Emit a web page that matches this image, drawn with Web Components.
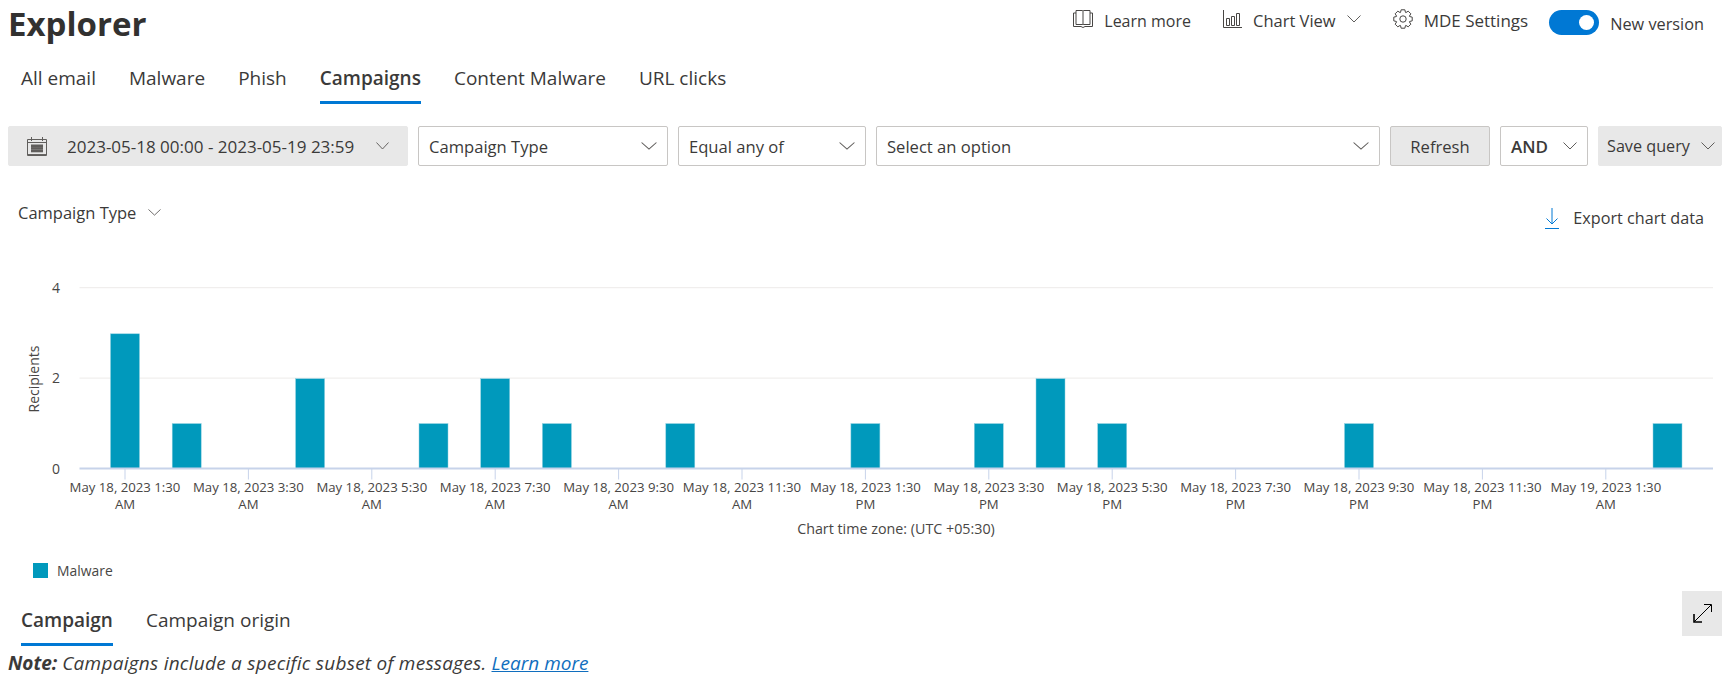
<!DOCTYPE html>
<html lang="en">
<head>
<meta charset="utf-8">
<title>Explorer</title>
<style>
  html, body { margin: 0; height: 682px; overflow: hidden; background: #fff; }
  body { font-family: "Open Sans", "Noto Sans", sans-serif; color: #3b3a39; }
</style>
</head>
<body>
<explorer-page></explorer-page>

<script>
const chevron = (w = 14, h = 8) => `<svg width="${w}" height="${h}" viewBox="0 0 14 8" preserveAspectRatio="none" fill="none" stroke="#605e5c" stroke-width="1"><path d="M.5 .5 7 7 13.5 .5"/></svg>`;

// 8 rounded teeth, same outline as the settings gear
const gearPath = () => {
    let d = '';
    for (let i = 0; i < 8; i++) {
        const a = i * Math.PI / 4;
        [[7, -.36], [9.4, -.2], [9.4, .2], [7, .36]].forEach(([r, o]) => {
            const x = (10 + r * Math.sin(a + o)).toFixed(2);
            const y = (10 - r * Math.cos(a + o)).toFixed(2);
            d += (d ? 'L' : 'M') + x + ' ' + y;
        });
    }
    return d + 'Z';
};

const calendarDots = () => {
    let s = '';
    for (let r = 0; r < 3; r++) {
        for (let c = 0; c < 4; c++) {
            s += `<rect x="${4.5 + c * 3}" y="${8 + r * 2.6}" width="2" height="1.6" fill="#a19f9d"/>`;
        }
    }
    return s;
};

const ICONS = {
    book: `<svg width="20" height="18" viewBox="0 0 20 18" fill="none" stroke="#484644"><path d="M3 .5H9.5L10 1.2 10.5 .5H17V14.5H10.5L10 15 9.5 14.5H3ZM10 1.2V15M3 3H.5V16.5H8L10 17.5 12 16.5H19.5V3H17"/></svg>`,
    chart: `<svg width="19" height="18" viewBox="0 0 19 18" fill="none" stroke="#484644"><path d="M.5 0V17.5H19M3.5 8.5H6.5V15.5H3.5ZM8.5 6.5H11.5V15.5H8.5ZM13.5 3.5H16.5V15.5H13.5Z"/></svg>`,
    gear: `<svg width="20" height="20" viewBox="0 0 20 20" fill="none" stroke="#484644" stroke-linejoin="round"><circle cx="10" cy="10" r="3.2"/><path d="${gearPath()}"/></svg>`,
    calendar: `<svg width="20" height="19" viewBox="0 0 20 19" fill="none" stroke="#605e5c"><path d="M.5 2.5H19.5V18.5H.5ZM4.5 0V4M15.5 0V4M1 5.5H19"/><path stroke-width="1.5" d="M1 17.8H19"/>${calendarDots()}</svg>`,
    download: `<svg width="14" height="21" viewBox="0 0 14 21" fill="none" stroke="#0078d4"><path d="M7 0V16M1.5 10.5 7 16 12.5 10.5M0 20.5H14"/></svg>`,
    expand: `<svg width="21" height="21" viewBox="0 0 21 21" fill="none" stroke="#000"><path d="M2 19 19 2M12 1.5H19.5V9"/><path stroke-width="1.6" d="M2 11V19H10"/></svg>`
};

class HeaderLink extends HTMLElement {
    constructor() {
        super();
        this.root = this.attachShadow({ mode: 'open' });
    }
    connectedCallback() {
        const icon = this.getAttribute('icon');
        this.root.innerHTML = `
            <style>
                :host { display: inline-flex; align-items: center; font-size: 16.5px; gap: 11px; height: 20px; }
                .chev { display: flex; }
                .label { padding-top: 3px; }
            </style>
            ${ICONS[icon] || ''}
            <span class="label"><slot></slot></span>
            ${this.hasAttribute('menu') ? `<span class="chev">${chevron()}</span>` : ''}
        `;
    }
}
customElements.define('header-link', HeaderLink);

class ToggleSwitch extends HTMLElement {
    constructor() {
        super();
        this.root = this.attachShadow({ mode: 'open' });
    }
    connectedCallback() {
        this.root.innerHTML = `
            <style>
                :host { display: inline-flex; align-items: center; gap: 11px; font-size: 16.3px; margin-left: -11px; }
                .track { width: 50px; height: 25px; border-radius: 13px; background: #0078d4; display: flex; align-items: center; justify-content: flex-end; padding-right: 5px; box-sizing: border-box; }
                .knob { width: 15px; height: 15px; border-radius: 50%; background: #fff; }
                .label { padding-top: 4px; }
            </style>
            <span class="track"><span class="knob"></span></span>
            <span class="label"><slot></slot></span>
        `;
    }
}
customElements.define('toggle-switch', ToggleSwitch);

class PageHeader extends HTMLElement {
    constructor() {
        super();
        this.root = this.attachShadow({ mode: 'open' });
    }
    connectedCallback() {
        this.root.innerHTML = `
            <style>
                :host { display: flex; justify-content: space-between; height: 53px; padding: 0 18px 0 8px; box-sizing: border-box; }
                h1 { margin: 0; font-size: 33px; font-weight: 700; line-height: 48px; color: #323130; }
                .actions { display: flex; align-items: flex-start; padding-top: 9px; gap: 32px; }
            </style>
            <h1>Explorer</h1>
            <div class="actions"><slot></slot></div>
        `;
    }
}
customElements.define('page-header', PageHeader);

class TabStrip extends HTMLElement {
    constructor() {
        super();
        this.root = this.attachShadow({ mode: 'open' });
    }
    connectedCallback() {
        this.root.innerHTML = `
            <style>
                :host { display: flex; gap: 33px; padding-left: 21px; }
            </style>
            <slot></slot>
        `;
    }
}
customElements.define('tab-strip', TabStrip);

class TabItem extends HTMLElement {
    constructor() {
        super();
        this.root = this.attachShadow({ mode: 'open' });
    }
    connectedCallback() {
        this.root.innerHTML = `
            <style>
                :host { display: block; font-size: 19px; line-height: 24px; padding: 13px 0 11px; border-bottom: 3px solid transparent; }
                :host([active]) { font-weight: 600; border-bottom-color: #0078d4; }
            </style>
            <slot></slot>
        `;
    }
}
customElements.define('tab-item', TabItem);

class FilterBox extends HTMLElement {
    constructor() {
        super();
        this.root = this.attachShadow({ mode: 'open' });
    }
    connectedCallback() {
        const arrow = this.hasAttribute('button') ? '' : chevron(+this.getAttribute('arrow') || 16, 8);
        this.root.innerHTML = `
            <style>
                :host { display: flex; align-items: center; box-sizing: border-box; height: 40px; padding: 0 10px; border: 1px solid #c8c6c4; border-radius: 2px; font-size: 16.6px; justify-content: space-between; background: #fff; flex: none; }
                :host([filled]) { background: #e8e8e8; border-color: #e8e8e8; }
                :host([button]) { background: #e8e8e8; justify-content: center; }
                :host([strong]) { font-weight: 600; font-size: 17px; }
                svg { flex: none; }
            </style>
            <slot></slot>
            ${arrow}
        `;
    }
}
customElements.define('filter-box', FilterBox);

class FilterBar extends HTMLElement {
    constructor() {
        super();
        this.root = this.attachShadow({ mode: 'open' });
    }
    connectedCallback() {
        this.root.innerHTML = `
            <style>
                :host { display: flex; gap: 10px; padding-left: 8px; margin-top: 22px; }
            </style>
            <slot></slot>
        `;
    }
}
customElements.define('filter-bar', FilterBar);

class ChartToolbar extends HTMLElement {
    constructor() {
        super();
        this.root = this.attachShadow({ mode: 'open' });
    }
    connectedCallback() {
        this.root.innerHTML = `
            <style>
                :host { display: flex; justify-content: space-between; align-items: flex-start; margin-top: 24px; padding: 0 18px; height: 50px; font-size: 16.5px; }
                .pick { display: flex; align-items: center; gap: 12px; height: 44px; }
                .export { display: flex; align-items: center; gap: 14px; height: 56px; font-size: 16.2px; }
            </style>
            <div class="pick">Campaign Type ${chevron(13, 7)}</div>
            <div class="export">${ICONS.download} Export chart data</div>
        `;
    }
}
customElements.define('chart-toolbar', ChartToolbar);

class BarChart extends HTMLElement {
    constructor() {
        super();
        this.root = this.attachShadow({ mode: 'open' });
        // slot index -> recipients, one slot is an hour on the axis
        this.data = { 0: 3, 1: 1, 3: 2, 5: 1, 6: 2, 7: 1, 9: 1, 12: 1, 14: 1, 15: 2, 16: 1, 20: 1, 25: 1 };
        this.labels = [
            ['May 18, 2023 1:30', 'AM'], ['May 18, 2023 3:30', 'AM'], ['May 18, 2023 5:30', 'AM'],
            ['May 18, 2023 7:30', 'AM'], ['May 18, 2023 9:30', 'AM'], ['May 18, 2023 11:30', 'AM'],
            ['May 18, 2023 1:30', 'PM'], ['May 18, 2023 3:30', 'PM'], ['May 18, 2023 5:30', 'PM'],
            ['May 18, 2023 7:30', 'PM'], ['May 18, 2023 9:30', 'PM'], ['May 18, 2023 11:30', 'PM'],
            ['May 19, 2023 1:30', 'AM']
        ];
    }
    connectedCallback() {
        this.render();
    }
    render() {
        // the svg starts at y=240 of the page
        const base = 228.5, unit = 45.2, barUnit = 44.9, left = 79.5, right = 1713, first = 125, step = 61.7;
        const grid = [4, 2].map(v => `<line x1="${left}" x2="${right}" y1="${base - v * unit}" y2="${base - v * unit}" stroke="#edebe9"/>`).join('');
        const yLabels = [4, 2, 0].map(v => `<text x="60" y="${base - v * unit + 5}" text-anchor="end" font-size="14">${v}</text>`).join('');
        const bars = Object.entries(this.data).map(([i, v]) => {
            const cx = first + step * i;
            return `<rect x="${cx - 14.5}" y="${base - v * barUnit}" width="29" height="${v * barUnit}" fill="#0099bc" stroke="#8fd0e0" stroke-width=".5"/>`;
        }).join('');
        const ticks = this.labels.map((l, i) => {
            const x = first + step * 2 * i;
            return `<line x1="${x}" x2="${x}" y1="${base}" y2="${base + 11}" stroke="#c7d3ea"/>
                <text text-anchor="middle" font-size="13.2" x="${x}" y="${base + 23}">${l[0]}</text>
                <text text-anchor="middle" font-size="13.2" x="${x}" y="${base + 40}">${l[1]}</text>`;
        }).join('');
        this.root.innerHTML = `
            <style>
                :host { display: block; height: 300px; }
                svg { display: block; }
                text { fill: #484644; font-family: "Open Sans", "Noto Sans", sans-serif; }
            </style>
            <svg width="1722" height="300" viewBox="0 0 1722 300">
                ${grid}
                ${bars}
                <line x1="${left}" x2="${right}" y1="${base}" y2="${base}" stroke="#c7d3ea" stroke-width="2"/>
                ${ticks}
                ${yLabels}
                <text transform="translate(39 139) rotate(-90)" text-anchor="middle" font-size="14">Recipients</text>
                <text x="896" y="294" text-anchor="middle" font-size="14.3">Chart time zone: (UTC +05:30)</text>
            </svg>
        `;
    }
}
customElements.define('bar-chart', BarChart);

class ChartLegend extends HTMLElement {
    constructor() {
        super();
        this.root = this.attachShadow({ mode: 'open' });
    }
    connectedCallback() {
        this.root.innerHTML = `
            <style>
                :host { display: flex; align-items: center; gap: 9px; padding-left: 33px; font-size: 13.9px; color: #484644; height: 15px; margin-top: 23px; }
                i { width: 15px; height: 15px; background: #0099bc; }
            </style>
            <i></i><slot></slot>
        `;
    }
}
customElements.define('chart-legend', ChartLegend);

class ResultsHeader extends HTMLElement {
    constructor() {
        super();
        this.root = this.attachShadow({ mode: 'open' });
    }
    connectedCallback() {
        this.root.innerHTML = `
            <style>
                :host { display: flex; justify-content: space-between; align-items: flex-end; height: 55px; margin-top: 13px; }
                .expand { align-self: flex-start; width: 40px; height: 45px; background: #e8e8e8; display: flex; align-items: center; justify-content: center; }
            </style>
            <slot></slot>
            <div class="expand">${ICONS.expand}</div>
        `;
    }
}
customElements.define('results-header', ResultsHeader);

class NoteLine extends HTMLElement {
    constructor() {
        super();
        this.root = this.attachShadow({ mode: 'open' });
    }
    connectedCallback() {
        this.root.innerHTML = `
            <style>
                :host { display: block; padding: 5px 0 0 8px; font-size: 19px; line-height: 24px; font-style: italic; }
                b { font-weight: 700; }
                span { letter-spacing: .25px; }
                a { color: #106ebe; text-decoration: underline; }
            </style>
            <b>Note:</b> <span>Campaigns include a specific subset of messages.</span> <a href="#">Learn more</a>
        `;
    }
}
customElements.define('note-line', NoteLine);

class ExplorerPage extends HTMLElement {
    constructor() {
        super();
        this.root = this.attachShadow({ mode: 'open' });
    }
    connectedCallback() {
        this.root.innerHTML = `
            <style>
                :host { display: block; width: 1722px; height: 682px; overflow: hidden; }
                .date { display: flex; align-items: center; gap: 20px; font-size: 17px; }
            </style>
            <page-header>
                <header-link icon="book" style="font-size:16px">Learn more</header-link>
                <header-link icon="chart" menu>Chart View</header-link>
                <header-link icon="gear" style="font-size:17px">MDE Settings</header-link>
                <toggle-switch>New version</toggle-switch>
            </page-header>
            <tab-strip>
                <tab-item>All email</tab-item>
                <tab-item>Malware</tab-item>
                <tab-item>Phish</tab-item>
                <tab-item active>Campaigns</tab-item>
                <tab-item>Content Malware</tab-item>
                <tab-item>URL clicks</tab-item>
            </tab-strip>
            <filter-bar>
                <filter-box filled arrow="13" style="width:400px;padding:0 18px"><span class="date">${ICONS.calendar}2023-05-18 00:00 - 2023-05-19 23:59</span></filter-box>
                <filter-box style="width:250px">Campaign Type</filter-box>
                <filter-box style="width:188px">Equal any of</filter-box>
                <filter-box style="width:504px">Select an option</filter-box>
                <filter-box button style="width:100px">Refresh</filter-box>
                <filter-box strong arrow="14" style="width:88px">AND</filter-box>
                <filter-box filled arrow="14" style="width:124px;padding:0 6px 0 8px;font-size:16.2px">Save query</filter-box>
            </filter-bar>
            <chart-toolbar></chart-toolbar>
            <bar-chart></bar-chart>
            <chart-legend>Malware</chart-legend>
            <results-header>
                <tab-strip>
                    <tab-item active>Campaign</tab-item>
                    <tab-item>Campaign origin</tab-item>
                </tab-strip>
            </results-header>
            <note-line></note-line>
        `;
    }
}
customElements.define('explorer-page', ExplorerPage);
</script>
</body>
</html>
